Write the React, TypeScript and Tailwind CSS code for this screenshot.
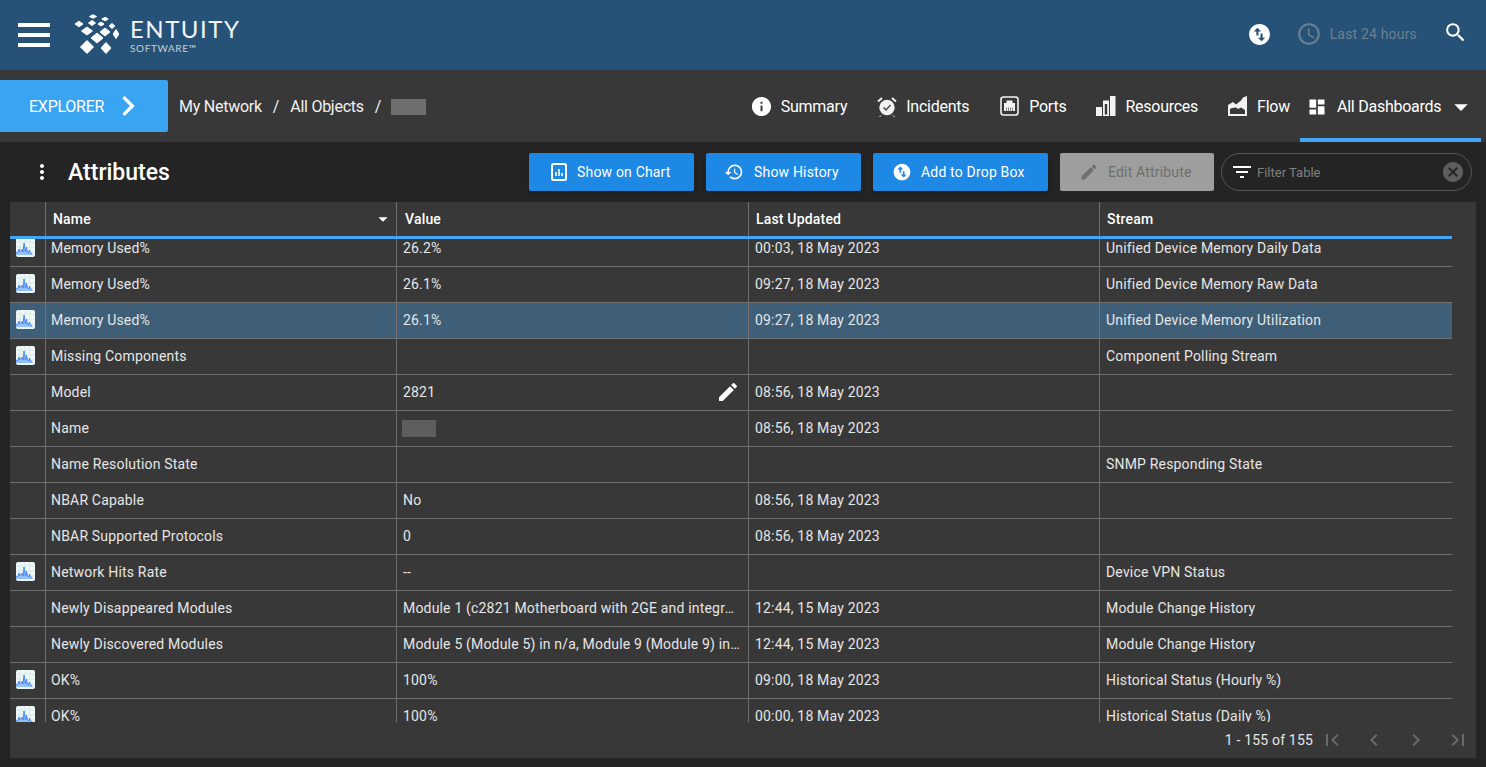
import {
  MdAccessTime,
  MdArrowDropDown,
  MdCancel,
  MdChevronLeft,
  MdChevronRight,
  MdDashboard,
  MdEdit,
  MdFilterList,
  MdFirstPage,
  MdHistory,
  MdInfo,
  MdLastPage,
  MdMoreVert,
  MdSearch,
  MdSwapVerticalCircle,
} from "react-icons/md";

const rows = [
  { chart: true, name: "Memory Used%", value: "26.2%", updated: "00:03, 18 May 2023", stream: "Unified Device Memory Daily Data" },
  { chart: true, name: "Memory Used%", value: "26.1%", updated: "09:27, 18 May 2023", stream: "Unified Device Memory Raw Data" },
  { chart: true, name: "Memory Used%", value: "26.1%", updated: "09:27, 18 May 2023", stream: "Unified Device Memory Utilization", selected: true },
  { chart: true, name: "Missing Components", value: "", updated: "", stream: "Component Polling Stream" },
  { chart: false, name: "Model", value: "2821", updated: "08:56, 18 May 2023", stream: "", editable: true },
  { chart: false, name: "Name", value: "", updated: "08:56, 18 May 2023", stream: "", redacted: true },
  { chart: false, name: "Name Resolution State", value: "", updated: "", stream: "SNMP Responding State" },
  { chart: false, name: "NBAR Capable", value: "No", updated: "08:56, 18 May 2023", stream: "" },
  { chart: false, name: "NBAR Supported Protocols", value: "0", updated: "08:56, 18 May 2023", stream: "" },
  { chart: true, name: "Network Hits Rate", value: "--", updated: "", stream: "Device VPN Status" },
  { chart: false, name: "Newly Disappeared Modules", value: "Module 1 (c2821 Motherboard with 2GE and integrated VPN)", updated: "12:44, 15 May 2023", stream: "Module Change History" },
  { chart: false, name: "Newly Discovered Modules", value: "Module 5 (Module 5) in n/a, Module 9 (Module 9) in n/a", updated: "12:44, 15 May 2023", stream: "Module Change History" },
  { chart: true, name: "OK%", value: "100%", updated: "09:00, 18 May 2023", stream: "Historical Status (Hourly %)" },
  { chart: true, name: "OK%", value: "100%", updated: "00:00, 18 May 2023", stream: "Historical Status (Daily %)" },
];

function Logo() {
  // x, y, half width, half height of each tile
  const tiles = [
    [13, 34, 6.5, 6.5], [32, 35, 5, 5.5],
    [23, 25, 6, 5], [13, 18, 5.5, 4], [31, 19, 5, 4], [42, 21, 2.8, 4.5],
    [5, 11, 4, 2.8], [18, 10, 3.5, 2.5], [27, 11, 3, 2], [38, 13, 2.8, 2.5],
    [19, 3.5, 3.5, 1.8], [31, 6, 3.2, 1.8],
  ];
  return (
    <svg width="46" height="42" viewBox="0 0 46 42" fill="white" className="block">
      {tiles.map(([x, y, w, h]) => (
        <polygon key={`${x}-${y}`} points={`${x - w},${y} ${x},${y - h} ${x + w},${y} ${x},${y + h}`} stroke="white" strokeWidth="1" strokeLinejoin="round" />
      ))}
    </svg>
  );
}

function SparkIcon() {
  return (
    <svg width="19" height="19" viewBox="0 0 19 19" className="block">
      <rect width="19" height="19" rx="2" fill="#f2f8f8" />
      <path d="M4 0v19M9 0v19M14 0v19M0 4h19M0 9h19M0 14h19" stroke="#cfe6e2" strokeWidth="0.8" />
      <path d="M0 15l2-1 1-3 1 3 1-1 1-2 1 3 1-9 1.5 9 1-5 1 5 1 1 1-3 1 3 2 1v1H0z" fill="#93c0f8" />
      <path d="M0 15l2-1 1-3 1 3 1-1 1-2 1 3 1-9 1.5 9 1-5 1 5 1 1 1-3 1 3 2 1" fill="none" stroke="#3b82f6" strokeWidth="0.9" />
    </svg>
  );
}

function ChartIcon() {
  return (
    <svg width="16" height="18" viewBox="0 0 16 18" fill="none">
      <rect x="1" y="1" width="14" height="16" rx="1.5" stroke="white" strokeWidth="2" />
      <path d="M5 9v4M8 6v7M11 10v3" stroke="white" strokeWidth="1.6" />
    </svg>
  );
}

function IncidentsIcon() {
  return (
    <svg width="20" height="21" viewBox="0 0 20 21">
      <circle cx="10" cy="11.5" r="7.7" fill="#f2f2f2" />
      <path d="M1 5.5L5 2M19 5.5L15 2" stroke="#f2f2f2" strokeWidth="2" />
      <path d="M4 19.5l-1.5 1.5M16 19.5l1.5 1.5" stroke="#f2f2f2" strokeWidth="1" />
      <path d="M6.5 11.5l2.5 2.5 4.5-5" fill="none" stroke="#4a4a4a" strokeWidth="1.5" />
    </svg>
  );
}

function PortsIcon() {
  return (
    <svg width="19" height="20" viewBox="0 0 19 20" className="block">
      <rect x="1" y="1" width="17" height="18" rx="2.5" fill="none" stroke="#f2f2f2" strokeWidth="1.6" />
      <path d="M6.5 4.5h6v2.5h2.5v8H4v-8h2.5z" fill="#f2f2f2" />
      <path d="M6.5 11.5v3.5M8.5 11.5v3.5M10.5 11.5v3.5M12.5 11.5v3.5" stroke="#666666" strokeWidth="0.8" />
    </svg>
  );
}

function ResourcesIcon() {
  return (
    <svg width="20" height="20" viewBox="0 0 20 20" fill="#f2f2f2" className="block">
      <rect x="0" y="11" width="6" height="9" />
      <path d="M7 4.5h6V20H7zM8.8 8v10.5h2.4V8z" fillRule="evenodd" />
      <rect x="14" y="0" width="5.5" height="20" />
    </svg>
  );
}

function FlowIcon() {
  return (
    <svg width="20" height="20" viewBox="0 0 20 20" fill="#f2f2f2" className="block">
      <path d="M0 9l5-3 3 2.5 5-4 2-3L19 0v20H0zM2 18h15v-4l-4-2.5-3 1.5-2-1.5L4 12l-2 1z" fillRule="evenodd" />
    </svg>
  );
}

const tabs = [
  { label: "Summary", icon: <MdInfo size={23} />, className: "mr-[30px] gap-[8px]" },
  { label: "Incidents", icon: <IncidentsIcon />, className: "mr-[31px] gap-[9px]" },
  { label: "Ports", icon: <PortsIcon />, className: "mr-[30px] gap-[10px]" },
  { label: "Resources", icon: <ResourcesIcon />, className: "mr-[30px] gap-[9px]" },
  { label: "Flow", icon: <FlowIcon />, className: "mr-[10px] gap-[9px]" },
];

const actions = [
  { label: "Show on Chart", icon: <ChartIcon />, width: "w-[165px]", pad: "pl-[22px] gap-[10px]" },
  { label: "Show History", icon: <MdHistory size={20} />, width: "w-[155px]", pad: "pl-[18px] gap-[10px]" },
  { label: "Add to Drop Box", icon: <MdSwapVerticalCircle size={20} />, width: "w-[175px]", pad: "pl-[19px] gap-[9px]" },
];

export default function App() {
  return (
    <div className="h-[767px] w-[1486px] overflow-hidden bg-[#242424] font-['Roboto',sans-serif] text-[14px] tracking-[0.18px] text-[#e6e6e6]">
      {/* top bar */}
      <header className="flex h-[70px] items-center bg-[#265277] pl-[18px] pr-[18px]">
        <div className="flex w-[32px] flex-col gap-[6px]">
          <span className="h-[4px] bg-white" />
          <span className="h-[4px] bg-white" />
          <span className="h-[4px] bg-white" />
        </div>
        <div className="ml-[24px] mt-[-2px]">
          <Logo />
        </div>
        <div className="ml-[10px] flex flex-col font-['Lato',sans-serif] tracking-normal text-[#f2f5f7]">
          <span className="text-[24px] leading-[24px] tracking-[1.5px]">ENTUITY</span>
          <span className="mt-[2px] text-[10px] leading-[10px] tracking-[0.6px] text-[#c5d0da]">SOFTWARE™</span>
        </div>
        <div className="ml-auto flex -translate-y-px items-center">
          <MdSwapVerticalCircle size={25} className="text-white" />
          <MdAccessTime size={26} className="ml-[24px] text-[#6d7f8f]" />
          <span className="ml-[8px] text-[14px] text-[#6d7f8f]">Last 24 hours</span>
          <MdSearch size={25} className="ml-[26px] -mt-[4px] text-white" />
        </div>
      </header>

      {/* nav bar */}
      <nav className="flex h-[72px] items-center bg-[#383838] pr-[5px] text-[16px] tracking-[-0.25px] text-white">
        <div className="flex h-[52px] w-[168px] items-center rounded-r-[2px] bg-[#39a4f1] pl-[29px]">
          <span className="pt-[2px]">EXPLORER</span>
          <MdChevronRight size={40} className="ml-[4px]" />
        </div>
        <div className="ml-[11px] flex items-center pt-[2px] text-[#f2f2f2]">
          <span>My Network</span>
          <span className="ml-[11px]">/</span>
          <span className="ml-[11px]">All Objects</span>
          <span className="ml-[11px]">/</span>
          <span className="ml-[10px] h-[16px] w-[35px] bg-[#6e6e6c]" />
        </div>
        <div className="ml-auto flex h-full items-center">
          {tabs.map((tab) => (
            <div key={tab.label} className={`flex items-center ${tab.className}`}>
              {tab.icon}
              <span className="pt-[1px]">{tab.label}</span>
            </div>
          ))}
          <div className="flex h-full w-[181px] items-center border-b-[4px] border-[#42a5f5] pl-[7px] pt-[5px]">
            <MdDashboard size={20} />
            <span className="ml-[10px]">All Dashboards</span>
            <MdArrowDropDown size={32} className="ml-[4px]" />
          </div>
        </div>
      </nav>

      {/* toolbar */}
      <div className="flex h-[60px] items-center pl-[30px] pr-[14px]">
        <MdMoreVert size={24} className="text-white" />
        <h1 className="ml-[14px] pt-[2px] text-[23px] font-medium tracking-normal text-white">Attributes</h1>
        <div className="ml-auto flex items-center gap-[12px]">
          {actions.map((action) => (
            <button key={action.label} className={`flex h-[38px] items-center rounded-[2px] bg-[#1e88e5] text-white shadow-md ${action.width} ${action.pad}`}>
              {action.icon}
              <span>{action.label}</span>
            </button>
          ))}
          <button className="flex h-[38px] w-[154px] items-center gap-[9px] rounded-[2px] bg-[#9e9e9e] pl-[19px] text-[#6e6e6e]">
            <MdEdit size={20} />
            <span>Edit Attribute</span>
          </button>
        </div>
        <div className="ml-[7px] flex h-[38px] w-[251px] items-center rounded-full border border-[#555555] pl-[8px] pr-[6px]">
          <MdFilterList size={24} className="text-white" />
          <span className="ml-[3px] pt-[2px] text-[13px] tracking-normal text-[#808080]">Filter Table</span>
          <MdCancel size={24} className="ml-auto text-[#5e5e5e]" />
        </div>
      </div>

      {/* table panel */}
      <section className="mx-[10px] h-[556px] bg-[#383838]">
        <div className="w-[1442px]">
          <div className="grid h-[37px] grid-cols-[35px_351px_352px_351px_353px] border-b-[3px] border-[#42a5f5] text-[14px] font-medium text-white">
            <div />
            <div className="relative flex items-center border-l border-[#707070] pl-[7px]">
              Name
              <MdArrowDropDown size={22} className="absolute right-[2px] top-[6px]" />
            </div>
            <div className="flex items-center border-l border-[#707070] pl-[8px]">Value</div>
            <div className="flex items-center border-l border-[#707070] pl-[7px]">Last Updated</div>
            <div className="flex items-center border-l border-[#707070] pl-[7px]">Stream</div>
          </div>
          <div className="h-[483px] overflow-hidden">
            <div className="-mt-[8px]">
              {rows.map((row, i) => (
                <div
                  key={`${row.name}-${i}`}
                  className={`grid h-[36px] grid-cols-[35px_351px_352px_351px_353px] border-b border-[#707070] leading-[35px] ${row.selected ? "bg-[#3e5f77]" : ""}`}
                >
                  <div className="flex items-center pb-[2px] pl-[6px]">{row.chart && <SparkIcon />}</div>
                  <div className="border-l border-[#707070] pl-[5px]">{row.name}</div>
                  <div className="relative truncate border-l border-[#707070] pl-[6px] pr-[8px]">
                    {row.value}
                    {row.editable && <MdEdit size={24} className="absolute right-[8px] top-[5px] text-white" />}
                    {row.redacted && <span className="absolute left-[5px] top-[9px] h-[17px] w-[34px] bg-[#5e5e5e]" />}
                  </div>
                  <div className="border-l border-[#707070] pl-[6px]">{row.updated}</div>
                  <div className="border-l border-[#707070] pl-[6px]">{row.stream}</div>
                </div>
              ))}
            </div>
          </div>
        </div>
        <div className="flex h-[36px] items-center justify-end pr-[6px] text-[#e6e6e6]">
          <span className="mr-[7px]">1 - 155 of 155</span>
          <div className="flex items-center gap-[18px] text-[#6a6a6a]">
            <MdFirstPage size={24} />
            <MdChevronLeft size={24} />
            <MdChevronRight size={24} />
            <MdLastPage size={24} />
          </div>
        </div>
      </section>
    </div>
  );
}
